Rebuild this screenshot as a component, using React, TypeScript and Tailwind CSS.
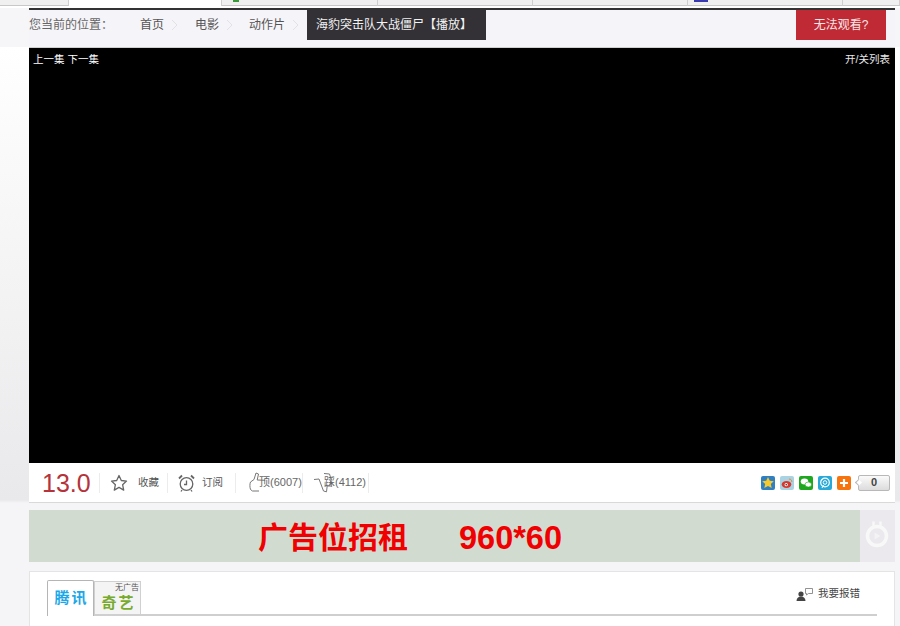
import { Fragment } from "react";

const CJK = "font-['Liberation_Sans','Noto_Sans_CJK_SC',sans-serif]";

const CRUMBS = ["首页", "电影", "动作片"];

// browser tab strip cut off by the top of the capture
const TABS = [
  { w: "w-[69px]", bg: "bg-[#f0f0f0] border-b border-[#c8c8c8]", mark: null },
  { w: "w-[153px]", bg: "bg-white", mark: null },
  { w: "w-[156px]", bg: "bg-[#f0f0f0] border-b border-[#c8c8c8]", mark: "bg-[#3a9a3a] w-[6px] ml-[11px]" },
  { w: "w-[155px]", bg: "bg-[#f0f0f0] border-b border-[#c8c8c8]", mark: null },
  { w: "w-[155px]", bg: "bg-[#f0f0f0] border-b border-[#c8c8c8]", mark: null },
  { w: "w-[155px]", bg: "bg-[#f0f0f0] border-b border-[#c8c8c8]", mark: "bg-[#3b3bb0] w-[14px] ml-[6px]" },
  { w: "flex-1", bg: "bg-[#f0f0f0] border-b border-[#c8c8c8]", mark: null },
];

const Chevron = () => (
  <svg width="7" height="12" viewBox="0 0 7 12" fill="none" stroke="#e2e2e6" strokeWidth="1">
    <path d="M1 1l5 5-5 5" />
  </svg>
);

const Star = () => (
  <svg width="18" height="18" viewBox="0 0 18 18" fill="none" stroke="#666" strokeWidth="1.3" strokeLinejoin="round">
    <path d="M9 1.5l2.3 5 5.2.6-3.9 3.6 1.1 5.4L9 13.4l-4.7 2.7 1.1-5.4-3.9-3.6 5.2-.6z" />
  </svg>
);

const Clock = () => (
  <svg width="17" height="18" viewBox="0 0 17 18" fill="none" stroke="#666" strokeWidth="1.3">
    <circle cx="8.5" cy="10" r="6.3" />
    <path d="M8.5 6.5V10.5H6" />
    <path d="M1 4.5L4 1.5M16 4.5l-3-3" strokeWidth="1.8" />
    <path d="M4 16l-1 1.5M13 16l1 1.5" />
  </svg>
);

const ThumbUp = () => (
  <svg width="22" height="21" viewBox="0 0 22 21" fill="none" stroke="#777" strokeWidth="1" strokeLinejoin="round">
    <path d="M7 1l2.500 1-1.300 6 8 .3M7 1L5 7.500 1.500 10c-.8 2-.8 5 0 7.500L3.500 19H10" />
  </svg>
);

const ThumbDown = () => (
  <svg width="22" height="21" viewBox="0 0 22 21" fill="none" stroke="#777" strokeWidth="1" strokeLinejoin="round">
    <path d="M1 7.500l5-.5 4.500 12 3 .8.700-5.800h4M11 1.500l5.500.5 1.500 5-1 6" />
  </svg>
);

const ShareIcons = () => (
  <div className="flex items-center gap-[5px] mt-px">
    <svg width="14" height="14" viewBox="0 0 14 14">
      <rect width="14" height="14" rx="2" fill="#2f7fc1" />
      <path d="M7 1l1.800 3.800 4 .5-3 2.700.9 4L7 10l-3.700 2 .9-4-3-2.700 4-.5z" fill="#f6c92f" />
    </svg>
    <svg width="14" height="14" viewBox="0 0 14 14">
      <rect width="14" height="14" rx="2" fill="#a9d3e2" />
      <ellipse cx="6.500" cy="8.500" rx="4.800" ry="3.400" fill="#d9382e" />
      <circle cx="6.200" cy="8.700" r="1.600" fill="#fff" />
      <circle cx="6.200" cy="8.700" r=".8" fill="#222" />
      <path d="M9 3c2 0 3 1.500 2.800 3" fill="none" stroke="#e88a2e" strokeWidth="1" />
    </svg>
    <svg width="14" height="14" viewBox="0 0 14 14">
      <rect width="14" height="14" rx="2" fill="#1fa81f" />
      <ellipse cx="5.500" cy="5.500" rx="3.800" ry="3" fill="#fff" />
      <ellipse cx="9.300" cy="8.500" rx="3.200" ry="2.500" fill="#fff" stroke="#1fa81f" strokeWidth=".6" />
    </svg>
    <svg width="14" height="14" viewBox="0 0 14 14">
      <rect width="14" height="14" rx="2" fill="#29a9d8" />
      <circle cx="7" cy="6.500" r="4.300" fill="none" stroke="#fff" strokeWidth="1.200" />
      <circle cx="7" cy="6.500" r="1.800" fill="none" stroke="#fff" strokeWidth="1" />
      <path d="M4 12l1.500-3" stroke="#fff" strokeWidth="1" />
    </svg>
    <svg width="14" height="14" viewBox="0 0 14 14">
      <rect width="14" height="14" rx="2" fill="#f7730e" />
      <path d="M7 3v8M3 7h8" stroke="#fff" strokeWidth="2.200" />
    </svg>
  </div>
);

const ActionDivider = () => <span className="w-px h-[20px] bg-[#ececec]" />;

export default function App() {
  return (
    <div className={`${CJK} h-[626px] overflow-hidden bg-[linear-gradient(to_bottom,#f6f5f8_47px,#ffffff_47px,#e9e9eb_500px,#f5f5f8_503px)]`}>
      <div className="h-[8px] bg-white">
        <div className="flex h-[6px]">
          {TABS.map((tab, i) => (
            <div key={i} className={`${tab.w} ${tab.bg} border-r border-r-[#cfcfcf]`}>
              {tab.mark && <div className={`${tab.mark} h-[2px]`} />}
            </div>
          ))}
        </div>
      </div>

      <div className="ml-[29px] w-[866px] flex flex-col">
        <div className="h-[2px] bg-[#333333]" />

        <div className="h-[37px] bg-[#f5f4f8] flex items-start text-[12px] text-[#666666]">
          <span className="w-[111px] h-[30px] flex items-center">您当前的位置：</span>
          {CRUMBS.map((c, i) => (
            <Fragment key={c}>
              <span className="h-[30px] flex items-center text-[#555555]">{c}</span>
              <span className={`h-[30px] flex items-center ml-[7px] ${i === 1 ? "mr-[16px]" : "mr-[17px]"}`}>
                <Chevron />
              </span>
            </Fragment>
          ))}
          <span className="-ml-[9px] w-[179px] h-[30px] bg-[#333136] text-[#f2f2f2] flex items-center pl-[9px]">
            海豹突击队大战僵尸【播放】
          </span>
          <span className="ml-auto mr-[9px] w-[90px] h-[30px] bg-[#bf2a35] text-[#f8e6e6] flex items-center justify-center">
            无法观看?
          </span>
        </div>

        <div className="h-[1px] bg-[#cfcfcf]" />

        <div className="h-[415px] bg-black flex justify-between items-start px-[4px] pt-[4px] text-[10.5px] leading-[14px] text-white">
          <span>上一集 下一集</span>
          <span className="text-[#e8e8e8] pr-px">开/关列表</span>
        </div>

        <div className="h-[40px] bg-white border-b border-[#d9d9d9] flex items-center text-[10.5px] text-[#555555]">
          <span className="ml-[13px] w-[57px] text-[25px] leading-none text-[#b5333a] pt-px font-['Liberation_Sans',sans-serif]">13.0</span>
          <ActionDivider />
          <span className="ml-[10px]"><Star /></span>
          <span className="ml-[10px] w-[29px]">收藏</span>
          <ActionDivider />
          <span className="ml-[10px]"><Clock /></span>
          <span className="ml-[7px] w-[33px]">订阅</span>
          <ActionDivider />
          <span className="ml-[13px] flex items-center w-[53px] relative">
            <ThumbUp />
            <span className="absolute left-[10px] whitespace-nowrap text-[11px] text-[#666666]">顶(6007)</span>
          </span>
          <ActionDivider />
          <span className="ml-[10px] flex items-center w-[55px] relative">
            <ThumbDown />
            <span className="absolute left-[11px] whitespace-nowrap text-[11px] text-[#666666]">踩(4112)</span>
          </span>
          <ActionDivider />
          <div className="ml-auto mr-[5px] flex items-center">
            <ShareIcons />
            <div className="ml-[7px] relative w-[32px] h-[16px] border border-[#b8b8b8] rounded-[2px] bg-[linear-gradient(#fafafa,#dcdcdc)] flex items-center justify-center text-[11px] font-bold text-[#444444]">
              <span className="absolute -left-[3px] top-[4px] w-[5px] h-[5px] rotate-45 bg-white border-l border-b border-[#b8b8b8]" />
              0
            </div>
          </div>
        </div>

        <div className="mt-[7px] h-[52px] flex">
          <div className="w-[831px] bg-[#d1dbd0] flex items-center pl-[229px] pt-[4px] text-[30px] font-bold text-[#f00000] leading-none">
            <span className="w-[201px] whitespace-nowrap">广告位招租</span>
            <span className="text-[32.500px] font-['Liberation_Sans',sans-serif]">960*60</span>
          </div>
          <div className="flex-1 bg-[#ebe9ed] flex items-center justify-center pr-[2px]">
            <svg width="24" height="32" viewBox="0 0 24 32" fill="none">
              <circle cx="12" cy="16" r="9.500" stroke="#f8f8f8" strokeWidth="3.500" />
              <path d="M9.500 12.500v7l6-3.500z" fill="#f8f8f8" opacity=".6" />
              <path d="M8.500 7V1.500M15.500 7V1.500" stroke="#f8f8f8" strokeWidth="2.500" />
            </svg>
          </div>
        </div>

        <div className="mt-[9px] h-[60px] bg-white border border-[#e4e4e4] pl-[17px] pr-[17px] relative">
          <div className="h-[44px] border-b-2 border-[#cfcfcf] flex items-end justify-between">
            <div className="flex items-end -mb-[2px]">
              <div className="w-[47px] h-[36px] bg-white border border-[#b5b5b5] border-b-0 rounded-t-[2px] flex items-center justify-center text-[15px] font-bold text-[#1ba7e8] tracking-[2px] pl-[2px]">
                腾讯
              </div>
              <div className="w-[47px] h-[35px] bg-[#f4f4f4] border border-[#d0d0d0] border-b-2 border-b-[#cfcfcf] relative flex items-end justify-center text-[15px] font-bold text-[#78ab2d] tracking-[2px] pl-[2px]">
                <span className="absolute top-[1px] right-[1px] text-[8px] leading-[10px] font-normal text-[#555555] tracking-normal">无广告</span>
                奇艺
              </div>
            </div>
            <div className="flex items-center gap-[5px] h-[24px] mb-[8px] mr-[17px] text-[10.5px] text-[#444444]">
              <svg width="17" height="13" viewBox="0 0 17 13" fill="none">
                <circle cx="5" cy="6" r="2.600" fill="#444" />
                <path d="M0.500 13c0-3 2-4.500 4.500-4.500S9.500 10 9.500 13z" fill="#444" />
                <path d="M9.500.5h7v5h-4L10.500 7V5.500h-1z" stroke="#777" strokeWidth=".8" />
              </svg>
              我要报错
            </div>
          </div>
        </div>
      </div>
    </div>
  );
}
